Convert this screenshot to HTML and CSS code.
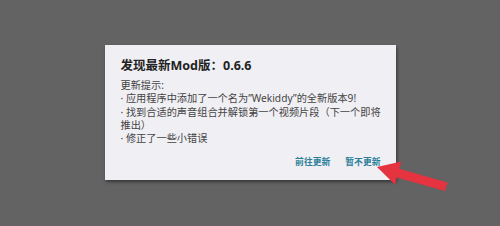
FILE: index.html
```html
<!DOCTYPE html>
<html lang="zh-CN">
<head>
    <meta charset="UTF-8">
    <meta name="viewport" content="width=device-width, initial-scale=1.0">
    <title>发现最新Mod版</title>
    <link rel="stylesheet" href="styles.css">
</head>
<body>
    <div class="dialog">
        <h2 class="dialog-title">发现最新Mod版：0.6.6</h2>
        <div class="dialog-body">
            <p>更新提示:</p>
            <p>· 应用程序中添加了一个名为”Wekiddy”的全新版本9!</p>
            <p>· 找到合适的声音组合并解锁第一个视频片段（下一个即将推出）</p>
            <p>· 修正了一些小错误</p>
        </div>
        <div class="dialog-actions">
            <button class="action">前往更新</button>
            <button class="action">暂不更新</button>
        </div>
    </div>
    <svg class="arrow" width="500" height="226" viewBox="0 0 500 226">
        <polygon points="377,167 401.4,161.5 399.3,168.7 447.4,182.5 445,191.1 396.9,177.4 394.8,184.6" fill="#e5333f"/>
    </svg>
</body>
</html>
```

FILE: styles.css
```css
body {
    margin: 0;
    height: 226px;
    background-color: #636363;
    display: flex;
    justify-content: center;
    align-items: flex-start;
    padding-top: 45px;
    box-sizing: border-box;
    font-family: "Noto Sans", "Noto Sans CJK SC", sans-serif;
    overflow: hidden;
}
.dialog {
    width: 291px;
    height: 135px;
    box-sizing: border-box;
    padding: 12px 11px 0 16px;
    background-color: #f0eff4;
    box-shadow: 1px 2px 3px rgba(0, 0, 0, 0.45);
}
.dialog-title {
    margin: 0 0 4px;
    font-size: 12.5px;
    line-height: 18px;
    font-weight: bold;
    color: #222;
}
.dialog-body {
    font-size: 10.2px;
    line-height: 13.3px;
    color: #444;
}
.dialog-body p {
    margin: 0;
}
.dialog-actions {
    display: flex;
    justify-content: flex-end;
    gap: 15px;
    margin-top: 11px;
    padding-right: 4px;
}
.action {
    padding: 0;
    border: none;
    background: none;
    font-family: inherit;
    font-size: 8.8px;
    line-height: 12px;
    font-weight: bold;
    color: #2a7f99;
    cursor: pointer;
}
.arrow {
    position: absolute;
    left: 0;
    top: 0;
}
```
